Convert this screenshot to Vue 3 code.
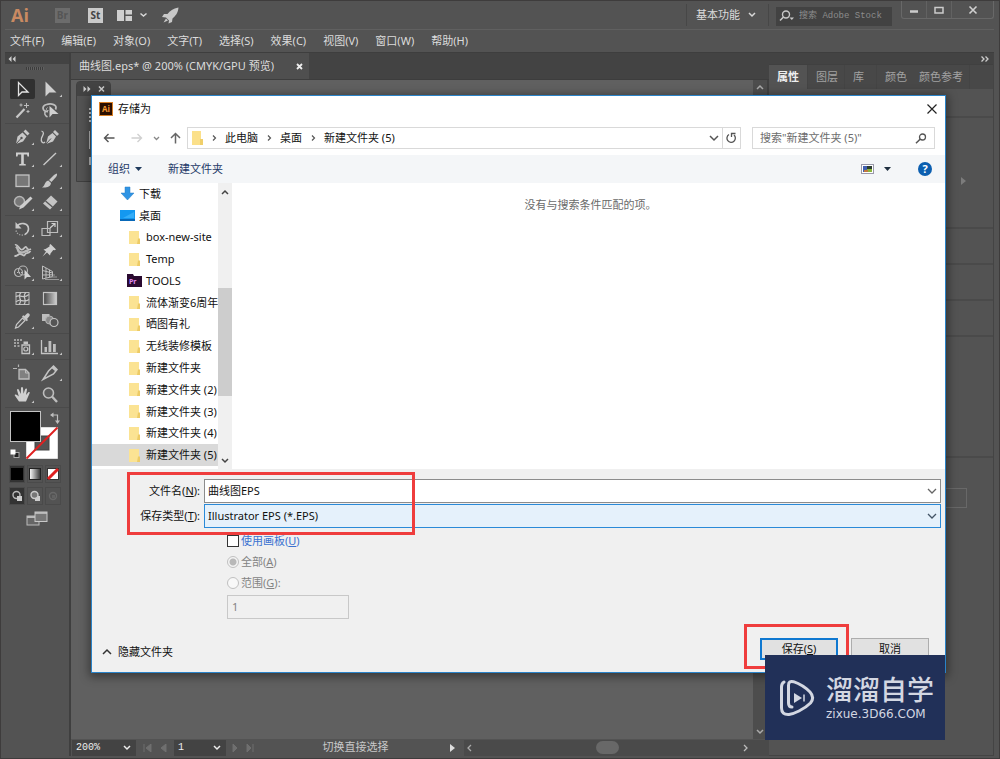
<script setup>
import { ref } from 'vue'

const menus = ['文件(F)', '编辑(E)', '对象(O)', '文字(T)', '选择(S)', '效果(C)', '视图(V)', '窗口(W)', '帮助(H)']
const panelTabs = ['属性', '图层', '库', '颜色', '颜色参考']
const sections = ['s29', 's111', 's36', 's36', 's36', 's121']

const tri = '<path d="M26 16.5V19h-2.5z" fill="#c4c4c4"/>'
const groups = [
  [
    { name: '选择工具', on: true, svg: '<path d="M10.5 4.5V17.5L14 14H20Z" fill="none" stroke="#e4e4e4" stroke-width="1.3"/>' },
    { name: '直接选择工具', svg: '<path d="M9.5 3.5V18.5L13.4 14.5H20.5Z" fill="#cfcfcf"/>' + tri },
    { name: '魔棒工具', svg: '<path d="M8.500 17.500L16.500 9" stroke="#c8c8c8" stroke-width="2.200"/><path d="M18.500 3v5M16 5.500h5M13 3.500v3M11.500 5h3M20 10v3M18.500 11.500h3" stroke="#bdbdbd"/>' },
    { name: '套索工具', svg: '<path d="M19.500 9.500C22 4.500 15 3 10.500 4.500C5.500 6 6 11.500 12 11.500" fill="none" stroke="#bdbdbd" stroke-width="1.800"/><path d="M10 11C7.500 13 9 15.500 11.500 17" fill="none" stroke="#bdbdbd" stroke-width="1.500"/><path d="M13.500 6V17.500l3-3.500h6Z" fill="#d0d0d0"/><path d="M11.500 7.500c-2 1.500-1 3.500 1 3" fill="none" stroke="#bdbdbd"/>' }
  ],
  [
    { name: '钢笔工具', svg: '<path d="M8 18L9.500 10.500L14.500 6.500L18.500 10.500L15 15.500Z" fill="#c8c8c8"/><path d="M15.500 5.500L17.500 3.500L21.500 7.500L19.500 9.500Z" fill="#c8c8c8"/><path d="M8 18L13 12.500" stroke="#535353"/><circle cx="13.500" cy="12" r="1.200" fill="#535353"/>' + tri },
    { name: '曲率工具', svg: '<path d="M10 18L12 10.500L16.500 7L20 10.500L17 15.500Z" fill="#c8c8c8"/><path d="M17 6L19 4L23 8L21 10Z" fill="#c8c8c8"/><path d="M10 18L15 12.500" stroke="#535353"/><path d="M5.500 5C9 6 7 9 5.500 12C4.500 16 7 18 9 16" fill="none" stroke="#c8c8c8" stroke-width="1.300"/>' },
    { name: '文字工具', svg: '<path d="M8 4.500H21V8.500H19.500L19 6.500H15.800V15.800L17.800 16.300V17.500H11.200V16.300L13.200 15.800V6.500H10L9.500 8.500H8Z" fill="#cfcfcf"/>' + tri },
    { name: '直线段工具', svg: '<path d="M7.500 17L20 5" stroke="#c8c8c8" stroke-width="1.400"/>' + tri },
    { name: '矩形工具', svg: '<rect x="8" y="5" width="13" height="11.500" fill="#777" stroke="#c4c4c4" stroke-width="1.300"/>' + tri },
    { name: '画笔工具', svg: '<path d="M20.500 3.500C21.500 4 21 5.500 20 7L15.500 12L13 10L18 5Z" fill="#c8c8c8"/><path d="M12.300 10.500L15 13C14.500 17 10.500 18 6 17.500C9 16 8.500 11.500 12.300 10.500Z" fill="#c8c8c8"/>' + tri },
    { name: '形状生成工具', svg: '<circle cx="11.500" cy="9.500" r="5" fill="#777" stroke="#b5b5b5" stroke-width="1.500"/><path d="M22.500 4.500L24.500 6.500L15.500 15.500L11 17.500L12.500 13.500Z" fill="#cfcfcf"/>' + tri },
    { name: '橡皮擦工具', svg: '<path d="M15 3.500L21.500 9.500L14 17.500L7 11.500Z" fill="#c4c4c4"/><path d="M9.500 9L16.500 15" stroke="#535353" stroke-width="1.200"/>' + tri }
  ],
  [
    { name: '旋转工具', svg: '<path d="M9 8.500C12 3.500 20.500 5 20.500 11C20.500 14 18.500 15.500 17 16.500" fill="none" stroke="#c8c8c8" stroke-width="1.600"/><path d="M7.500 4V10.500H13.500Z" fill="#c8c8c8"/><path d="M8 12.500C9 16.500 13 18 17 16.500" fill="none" stroke="#aaa" stroke-width="1.300" stroke-dasharray="1.200 1.400"/>' + tri },
    { name: '比例缩放工具', svg: '<path d="M11.500 3.500H21.500V14.500H11.500Z" fill="none" stroke="#bdbdbd" stroke-width="1.200"/><path d="M6 10.500H14V17.500H6Z" fill="none" stroke="#bdbdbd" stroke-width="1.200"/><path d="M14 10L19 5.500M15.500 5.500H19V9" fill="none" stroke="#d0d0d0" stroke-width="1.200"/>' + tri },
    { name: '宽度工具', svg: '<path d="M6.500 15.500C9 17.500 10 13.500 12.500 14S16 17 17 14.500S20 14.500 22.500 11" fill="none" stroke="#c4c4c4" stroke-width="1.800"/><path d="M7 5C9.500 3.500 10.500 8 13 9.500S17 5 18.500 7.500S21 10 23 9" fill="none" stroke="#c4c4c4" stroke-width="1.600"/><path d="M8 6.500C11 9 9 12 13 12.500S18 9 20.500 11.500" fill="none" stroke="#b8b8b8" stroke-width="2.400"/>' + tri },
    { name: '操控变形工具', svg: '<path d="M14.500 4L20 9.500L18.500 10.200L17.300 10L14.500 13.500L14 15.500L11 12.500L6.500 16.500L10 11.500L7.500 9.500L9.500 9L13.500 6.500L13.500 5Z" fill="#cfcfcf"/>' + tri },
    { name: '形状生成器工具', svg: '<circle cx="10.500" cy="10.500" r="4" fill="none" stroke="#b5b5b5" stroke-width="1.200"/><circle cx="15" cy="8.500" r="4.500" fill="none" stroke="#b5b5b5" stroke-width="1.200"/><path d="M9 10.500h6" stroke="#bbb" stroke-dasharray="1 1"/><path d="M16.500 7.500V17.500L19 15H23Z" fill="#d4d4d4"/>' + tri },
    { name: '透视网格工具', svg: '<path d="M6.500 4V17M6.500 4L16.500 9.500V14.500L6.500 17M6.500 8.500L16.500 11M6.500 13L16.500 12.800M10 6V16M13.500 7.800V15.300" fill="none" stroke="#bdbdbd"/><path d="M17 13H19M14 15H21M9 17.500H23" stroke="#999"/>' + tri }
  ],
  [
    { name: '网格工具', svg: '<rect x="8" y="4.500" width="13" height="12" fill="none" stroke="#bdbdbd"/><path d="M8 9C11 5 14 12 21 6.500M8 14C12 9 15 16 21 11.500M13 4.500C8.500 9 15.500 12 11 16.500M18 4.500C13 8 20 12 16 16.500" fill="none" stroke="#c8c8c8" stroke-width="1.200"/>' },
    { name: '渐变工具', svg: '<defs><linearGradient id="toolRamp"><stop offset="0" stop-color="#444"/><stop offset="1" stop-color="#d0d0d0"/></linearGradient></defs><rect x="7.500" y="4.500" width="13" height="12" fill="url(#toolRamp)" stroke="#c4c4c4" stroke-width="1.200"/>' },
    { name: '吸管工具', svg: '<path d="M16.500 6L19 3.500C21 2.500 22.500 4.500 21.500 6L19 9L20 10L18.800 11.200L14 6.500L15.200 5.200Z" fill="#c8c8c8"/><path d="M14.500 8L17 10.500L10.500 17L7.500 18L8.500 14.500Z" fill="#555" stroke="#c8c8c8" stroke-width="1.200"/>' + tri },
    { name: '混合工具', svg: '<rect x="6" y="4" width="7.500" height="7" fill="#bdbdbd"/><circle cx="13.500" cy="10" r="4" fill="#888" stroke="#b5b5b5"/><circle cx="18" cy="12.500" r="4" fill="#555" stroke="#c4c4c4" stroke-width="1.200"/>' }
  ],
  [
    { name: '符号喷枪工具', svg: '<path d="M14 9H21.500V17.500H14Z" fill="none" stroke="#c4c4c4" stroke-width="1.300"/><path d="M15.500 8V5.500H20V8Z" fill="#c4c4c4"/><circle cx="17.800" cy="13" r="2" fill="none" stroke="#c4c4c4" stroke-width="1.200"/><path d="M6 4h2M9 4h2M12 4h2M6 7h2M9 7h2M6 10h2M9.500 10h2" stroke="#bbb" stroke-width="1.400"/>' + tri },
    { name: '柱形图工具', svg: '<path d="M5.500 4V17.500H22" fill="none" stroke="#c4c4c4" stroke-width="1.300"/><path d="M8.500 11h2.500v5H8.500zM12.500 5h2.800v11h-2.800zM17 8h2.800v8H17z" fill="#bdbdbd"/>' + tri }
  ],
  [
    { name: '画板工具', svg: '<path d="M5 6.500H9M10.500 2.500V5" fill="none" stroke="#b5b5b5" stroke-width="1.200"/><path d="M11 7.500H17.500L21 11V17H11Z" fill="#808080" stroke="#bdbdbd" stroke-width="1.300"/><path d="M17.500 7.500V11H21" fill="none" stroke="#bdbdbd"/>' },
    { name: '切片工具', svg: '<path d="M17.500 4L21 7.500L17.500 12L7 17.500L12.500 9Z" fill="none" stroke="#c4c4c4" stroke-width="1.500"/><path d="M17.500 4L21 7.500L19.500 9.500L15.500 6Z" fill="#c4c4c4"/>' + tri },
    { name: '抓手工具', svg: '<path d="M11 17.500L6.800 11.500C6.500 10.500 8 10 9 11L10.800 12.500L9 6C9 4.800 10.500 4.700 11 6L12.800 10L13 4C13.200 2.800 14.800 2.800 15 4L15.500 9.800L17.200 5C17.800 4 19.200 4.500 19 5.600L18 11L20.300 8.200C21.200 7.500 22.200 8.300 21.600 9.300L18 17.500Z" fill="#cfcfcf"/>' + tri },
    { name: '缩放工具', svg: '<circle cx="12.500" cy="9" r="5" fill="#5c5c5c" stroke="#bdbdbd" stroke-width="1.600"/><path d="M16 12.500L21 18" stroke="#bdbdbd" stroke-width="2.400"/>' }
  ]
]

const tree = [
  { label: '下载', kind: 'down', top: true },
  { label: '桌面', kind: 'desk', top: true },
  { label: 'box-new-site', kind: 'folder' },
  { label: 'Temp', kind: 'folder' },
  { label: 'TOOLS', kind: 'pr' },
  { label: '流体渐变6周年', kind: 'folder' },
  { label: '晒图有礼', kind: 'folder' },
  { label: '无线装修模板', kind: 'folder' },
  { label: '新建文件夹', kind: 'folder' },
  { label: '新建文件夹 (2)', kind: 'folder' },
  { label: '新建文件夹 (3)', kind: 'folder' },
  { label: '新建文件夹 (4)', kind: 'folder' },
  { label: '新建文件夹 (5)', kind: 'folder', selected: true }
]
const crumbs = ['此电脑', '桌面', '新建文件夹 (5)']
const fileName = ref('曲线图EPS')
const fileType = ref('eps')
</script>

<template>
  <div class="app">
    <header class="titlebar">
      <span class="logo">Ai</span>
      <button class="badge br">Br</button>
      <button class="badge st">St</button>
      <button class="plain arrange" aria-label="排列文档">
        <svg width="30" height="14" viewBox="0 0 30 14"><path d="M0 2h7v11H0zM8.500 2H15v4.500H8.500zM8.500 8H15v5H8.500z" fill="#cfcfcf" /><path d="M23.500 5.500L26.500 8L29.500 5.500" fill="none" stroke="#d8d8d8" stroke-width="1.500" /></svg>
      </button>
      <button class="plain rocket" aria-label="GPU 性能">
        <svg width="18" height="17" viewBox="0 0 18 17"><path d="M16.500 0.500C11 1.500 8 4 5.500 7H2L0 10L4 10.500L7 13.500L6.500 16.500L10 15L10.500 11.500C13.500 9 16 6 16.500 0.500Z" fill="#c8c8c8" /><path d="M4 11.500L1.500 15.500L6 13.500Z" fill="#c8c8c8" /></svg>
      </button>
      <span class="spacer"></span>
      <button class="plain workspace-btn">基本功能
        <svg width="8" height="6" viewBox="0 0 8 6"><path d="M1 1l3 3 3-3" fill="none" stroke="#d8d8d8" stroke-width="1.500" /></svg>
      </button>
      <label class="stock">
        <svg width="16" height="12" viewBox="0 0 16 12"><circle cx="7" cy="4.500" r="3.500" fill="none" stroke="#c8c8c8" stroke-width="1.400" /><path d="M4.500 7L1 10.500" stroke="#c8c8c8" stroke-width="1.600" /><path d="M10.500 7.500h4.500L12.800 10z" fill="#c8c8c8" /></svg>
        <input type="text" placeholder="搜索 Adobe Stock" aria-label="搜索 Adobe Stock" />
      </label>
      <div class="winctl">
        <button aria-label="最小化"><svg width="10" height="10"><path d="M1 6.500h8" stroke="#ccc" stroke-width="2.500" /></svg></button>
        <button aria-label="最大化"><svg width="10" height="10"><rect x="1" y="2.500" width="8" height="5.500" fill="none" stroke="#ccc" stroke-width="1.500" /></svg></button>
        <button class="wide" aria-label="关闭"><svg width="10" height="10"><path d="M1.500 1.500l7 7M8.500 1.500l-7 7" stroke="#d0d0d0" stroke-width="1.600" /></svg></button>
      </div>
    </header>

    <nav class="menubar">
      <button v-for="m in menus" :key="m">{{ m }}</button>
    </nav>

    <div class="work">
      <aside class="tools">
        <div class="strip"><svg width="8" height="6" viewBox="0 0 8 6"><path d="M3.500 0v6L0.500 3zM7.500 0v6L4.500 3z" fill="#ccc" /></svg></div>
        <div class="grip"></div>
        <div v-for="(g, i) in groups" :key="i" class="group">
          <button v-for="t in g" :key="t.name" class="tool" :class="{ on: t.on }" :aria-label="t.name">
            <svg width="28" height="22" viewBox="0 0 28 22" v-html="t.svg"></svg>
          </button>
        </div>
        <button class="plain swatches" aria-label="填色和描边">
          <svg width="54" height="52" viewBox="0 0 54 52">
            <path d="M18.500 18.500H49.500V49.500H18.500Z" fill="#fff" stroke="#ddd" />
            <rect x="27" y="27" width="14" height="14" fill="#535353" stroke="#444" />
            <path d="M18.500 49.500L49.500 18.500" stroke="#e02020" stroke-width="2" />
            <rect x="2.500" y="2.500" width="30" height="30" fill="#000" stroke="#c4c4c4" />
            <path d="M44 6H49.500V13" fill="none" stroke="#bdbdbd" stroke-width="1.200" /><path d="M42 6l3.500-2.500v5zM49.500 15l-2.500-3.500h5z" fill="#bdbdbd" />
            <rect x="6" y="43.500" width="5" height="5" fill="#222" stroke="#aaa" /><rect x="2.500" y="40.500" width="5" height="5" fill="#fff" />
          </svg>
        </button>
        <div class="modes">
          <button class="on" aria-label="颜色"><svg width="14" height="14"><rect x="1" y="1" width="12" height="12" fill="#000" /></svg></button>
          <button aria-label="渐变"><svg width="14" height="14"><defs><linearGradient id="modeRamp"><stop offset="0" stop-color="#fff" /><stop offset="1" stop-color="#333" /></linearGradient></defs><rect x="1.500" y="1.500" width="11" height="11" fill="url(#modeRamp)" stroke="#222" /></svg></button>
          <button aria-label="无"><svg width="14" height="14"><rect x="1.500" y="1.500" width="11" height="11" fill="#fff" stroke="#333" /><path d="M2 12L12 2" stroke="#e02020" stroke-width="3" /></svg></button>
        </div>
        <div class="modes draw">
          <button class="on" aria-label="正常绘图"><svg width="14" height="14"><circle cx="6.500" cy="6" r="3.500" fill="none" stroke="#bbb" stroke-width="1.400" /><path d="M7 7h5v5H7z" fill="#ccc" /></svg></button>
          <button aria-label="背面绘图"><svg width="14" height="14"><path d="M7 7h5v5H7z" fill="#ccc" /><circle cx="6.500" cy="6" r="3.500" fill="#777" stroke="#ccc" stroke-width="1.400" /></svg></button>
          <button aria-label="内部绘图" disabled><svg width="14" height="14"><circle cx="7" cy="7" r="3.500" fill="none" stroke="#686868" stroke-width="1.400" /><path d="M6 6h3v3H6z" fill="#626262" /></svg></button>
        </div>
        <button class="plain screen" aria-label="更改屏幕模式">
          <svg width="22" height="16" viewBox="0 0 22 16"><rect x="1" y="5" width="12" height="9" fill="#666" stroke="#bbb" /><path d="M1 6h12" stroke="#bbb" stroke-width="2" /><rect x="9" y="1" width="12" height="9.500" fill="#777" stroke="#c8c8c8" /><path d="M9 2h12" stroke="#c8c8c8" stroke-width="1.500" /></svg>
        </button>
      </aside>

      <main class="doc">
        <div class="doctabs">
          <div class="doctab"><span>曲线图.eps* @ 200% (CMYK/GPU 预览)</span>
            <button class="plain" aria-label="关闭文档"><svg width="7" height="7"><path d="M1 1l5 5M6 1L1 6" stroke="#eee" stroke-width="1.800" /></svg></button>
          </div>
        </div>
        <div class="canvasrow">
          <div class="canvas">
            <div class="floater">
              <div class="fhead"><svg width="22" height="8" viewBox="0 0 22 8"><path d="M0.500 1v6l3-3zM4.500 1v6l3-3z" fill="#ccc" /><path d="M16 1.500l5 5M21 1.500l-5 5" stroke="#ccc" stroke-width="1.500" /></svg></div>
              <svg class="fbody" width="10" height="70" viewBox="0 0 10 70"><path d="M2 13h2M2 17h2M2 21h2M2 25h2" stroke="#ccc" stroke-width="2" /><path d="M2.500 35v18" stroke="#bbb" /><path d="M4 38h6v4H4zM4 46h6v4H4zM2 61h8v8H2z" fill="#bbb" /></svg>
            </div>
          </div>
          <div class="vscroll">
            <svg width="8" height="6"><path d="M1 5l3-3 3 3" fill="none" stroke="#aaa" stroke-width="1.500" /></svg>
            <svg width="8" height="6"><path d="M1 1l3 3 3-3" fill="none" stroke="#aaa" stroke-width="1.500" /></svg>
          </div>
        </div>
        <footer class="status">
          <label class="cell zoom"><span>200%</span><svg width="8" height="6"><path d="M1 1l3 3 3-3" fill="none" stroke="#eee" stroke-width="1.500" /></svg></label>
          <svg class="pager" width="26" height="8" viewBox="0 0 26 8"><path d="M2 0v8M9 0v8L4 4zM24 0v8L19 4z" fill="#777" stroke="#777" /></svg>
          <label class="cell page"><span>1</span><svg width="8" height="6"><path d="M1 1l3 3 3-3" fill="none" stroke="#eee" stroke-width="1.500" /></svg></label>
          <svg class="pager" width="22" height="8" viewBox="0 0 22 8"><path d="M1 0v8L5 4zM15 0v8L19 4zM21 0v8" fill="#777" stroke="#777" /></svg>
          <span class="hint">切换直接选择</span>
          <svg class="play" width="6" height="8"><path d="M0 0v8l5-4z" fill="#ddd" /></svg>
          <div class="hscroll">
            <svg width="6" height="8"><path d="M5 1L2 4l3 3" fill="none" stroke="#aaa" stroke-width="1.300" /></svg>
            <i class="thumb"></i>
            <svg width="6" height="8"><path d="M1 1l3 3-3 3" fill="none" stroke="#bbb" stroke-width="1.300" /></svg>
          </div>
        </footer>
      </main>

      <aside class="panels">
        <div class="strip right"><svg width="8" height="6" viewBox="0 0 8 6"><path d="M0.500 0.500L3 3L0.500 5.500M4.500 0.500L7 3L4.500 5.500" fill="none" stroke="#ccc" stroke-width="1.300" /></svg></div>
        <div class="ptabs"><button v-for="(t, i) in panelTabs" :key="t" :class="{ on: i === 0 }">{{ t }}</button></div>
        <div v-for="(s, i) in sections" :key="i" class="section" :class="s">
          <svg v-if="i === 1" width="6" height="8"><path d="M0 0v8l5-4z" fill="#7c7c7c" /></svg>
        </div>
        <div class="section last"><span class="ghost"></span></div>
      </aside>
    </div>

    <section class="dialog" role="dialog" aria-label="存储为">
      <div class="dtitle">
        <span class="aiicon">Ai</span><span>存储为</span><span class="spacer"></span>
        <button class="plain" aria-label="关闭"><svg width="12" height="12"><path d="M1.500 1.500l9 9M10.500 1.500l-9 9" stroke="#222" stroke-width="1.200" /></svg></button>
      </div>
      <div class="dnav">
        <button class="plain" aria-label="后退"><svg width="12" height="10"><path d="M11.500 5H1.500M5.500 1L1.500 5l4 4" fill="none" stroke="#555" stroke-width="1.400" /></svg></button>
        <button class="plain fwd" aria-label="前进"><svg width="12" height="10"><path d="M0.500 5h10M6.500 1l4 4-4 4" fill="none" stroke="#d0d0d0" stroke-width="1.400" /></svg></button>
        <button class="plain hist" aria-label="最近"><svg width="7" height="5"><path d="M1 1l2.500 2.500L6 1" fill="none" stroke="#888" stroke-width="1.300" /></svg></button>
        <button class="plain up" aria-label="向上"><svg width="11" height="12"><path d="M5.500 11.500V1.500M1 6l4.500-4.500L10 6" fill="none" stroke="#666" stroke-width="1.500" /></svg></button>
        <div class="address">
          <svg width="13" height="16" viewBox="0 0 13 16"><path d="M1 1h9v14H1z" fill="#fbe08a" /><path d="M9 9h3v6H9z" fill="#f0cf6a" /></svg>
          <template v-for="c in crumbs" :key="c">
            <svg class="sep" width="5" height="8"><path d="M1 1.500L3.500 4L1 6.500" fill="none" stroke="#555" stroke-width="1.200" /></svg>
            <button class="plain crumb">{{ c }}</button>
          </template>
          <span class="spacer"></span>
          <button class="plain drop" aria-label="展开"><svg width="10" height="7"><path d="M1 1l4 4 4-4" fill="none" stroke="#555" stroke-width="1.500" /></svg></button>
          <button class="plain refresh" aria-label="刷新"><svg width="11" height="12" viewBox="0 0 11 12"><path d="M3 2.500A4.200 4.200 0 1 0 8 3" fill="none" stroke="#555" stroke-width="1.300" /><path d="M5.500 5V1.500H9.500" fill="none" stroke="#555" stroke-width="1.300" /></svg></button>
        </div>
        <label class="dsearch">
          <input type="text" placeholder='搜索"新建文件夹 (5)"' aria-label="搜索新建文件夹 (5)" />
          <svg width="12" height="11"><circle cx="7.500" cy="4" r="3" fill="none" stroke="#555" stroke-width="1.300" /><path d="M5.300 6L1 10.300" stroke="#555" stroke-width="1.500" /></svg>
        </label>
      </div>
      <div class="dbar">
        <button class="plain">组织<svg class="caret" width="7" height="4"><path d="M0 0h7L3.500 4z" fill="#1f3a5c" /></svg></button>
        <button class="plain newf">新建文件夹</button>
        <span class="spacer"></span>
        <button class="plain view" aria-label="更改视图">
          <svg width="30" height="10" viewBox="0 0 30 10"><rect x="0.500" y="0.500" width="12" height="9" fill="#fff" stroke="#99a" /><path d="M2 2h4v6H2z" fill="#4060b0" /><path d="M6 2h5v3H6z" fill="#2a3a30" /><path d="M6 5h5v3H6z" fill="#8ab53a" /><path d="M3 6h4v2H3z" fill="#c07840" /><path d="M23 3h7l-3.500 4z" fill="#1f2f3f" /></svg>
        </button>
        <button class="help" aria-label="帮助">?</button>
      </div>
      <div class="dbody">
        <ul class="tree">
          <li v-for="n in tree" :key="n.label" :class="{ top: n.top, sel: n.selected }">
            <svg v-if="n.kind === 'folder'" width="15" height="15" viewBox="0 0 15 15"><path d="M2 1h10v13H2z" fill="#fbe393" /><path d="M11 8.500h2V14h-3z" fill="#edcb66" /></svg>
            <svg v-else-if="n.kind === 'down'" width="15" height="15" viewBox="0 0 15 15"><path d="M5 1h5v6h4l-6.500 7L1 7h4z" fill="#2f94e4" stroke="#2a7cc4" stroke-width="0.500" /></svg>
            <svg v-else-if="n.kind === 'desk'" width="15" height="15" viewBox="0 0 15 15"><path d="M0 2h15v11H0z" fill="#1498f0" /><path d="M0 11h15v2H0z" fill="#0868b8" /><path d="M3 10L14 4v6z" fill="#35adf8" /></svg>
            <svg v-else width="15" height="15" viewBox="0 0 15 15"><path d="M0 1h6l1 2h8v11H0z" fill="#2a0a30" /><text x="2" y="11" font-size="7" font-weight="700" fill="#e08af0">Pr</text></svg>
            <span>{{ n.label }}</span>
          </li>
        </ul>
        <div class="tscroll">
          <svg width="8" height="6"><path d="M1 5l3-3 3 3" fill="none" stroke="#444" stroke-width="1.500" /></svg>
          <i></i>
          <svg width="8" height="6"><path d="M1 1l3 3 3-3" fill="none" stroke="#444" stroke-width="1.500" /></svg>
        </div>
        <div class="list">没有与搜索条件匹配的项。</div>
      </div>
      <div class="dform">
        <label class="flabel" for="fname">文件名(<u>N</u>):</label>
        <div class="combo"><input id="fname" v-model="fileName" type="text" /><svg width="10" height="7"><path d="M1 1l4 4 4-4" fill="none" stroke="#666" stroke-width="1.300" /></svg></div>
        <label class="flabel" for="ftype">保存类型(<u>T</u>):</label>
        <div class="combo type"><select id="ftype" v-model="fileType"><option value="eps">Illustrator EPS (*.EPS)</option></select><svg width="10" height="7"><path d="M1 1l4 4 4-4" fill="none" stroke="#456" stroke-width="1.300" /></svg></div>
        <div class="opts">
          <label class="opt blue"><input type="checkbox" /><span>使用画板(<u>U</u>)</span></label>
          <label class="opt"><input type="radio" name="range" checked disabled /><span>全部(<u>A</u>)</span></label>
          <label class="opt"><input type="radio" name="range" disabled /><span>范围(<u>G</u>):</span></label>
          <input class="range" type="text" value="1" disabled aria-label="范围" />
        </div>
      </div>
      <div class="dfoot">
        <button class="plain hide"><svg width="10" height="7"><path d="M1 6l4-4 4 4" fill="none" stroke="#333" stroke-width="1.500" /></svg>隐藏文件夹</button>
        <span class="spacer"></span>
        <button class="btn primary">保存(<u>S</u>)</button>
        <button class="btn">取消</button>
      </div>
      <div class="mark fields"></div>
      <div class="mark save"></div>
    </section>

    <div class="watermark">
      <svg width="36" height="38" viewBox="0 0 36 38"><path d="M5 3Q2.500 4.500 2.500 8V29Q2.500 36 10 35.500Q14 35 20 32Q27 28.500 31.500 24Q36 18.500 31 13Q24 6 14.500 2.700Q9.500 1.500 9.500 6.500V24Q9.500 28 13 28" fill="none" stroke="#d3d7e2" stroke-width="3" stroke-linecap="round" /><path d="M15 14l8 5-8 5z" fill="#d3d7e2" /><path d="M25 15.500v7" stroke="#d3d7e2" stroke-width="1.500" /></svg>
      <div><strong>溜溜自学</strong><span>zixue.3D66.COM</span></div>
    </div>
  </div>
</template>

<style>
body { margin: 0; background: #535353; }
</style>

<style scoped>
.app { position: relative; display: flex; flex-direction: column; min-height: 100vh; box-sizing: border-box; padding: 0 5px 2px 4px; background: #535353; border: 1px solid #3e3c3c; color: #dcdcdc; font: 11px/16px "Noto Sans", "Noto Sans CJK SC", sans-serif; overflow: hidden; }
button, input, select { font: inherit; color: inherit; }
button { margin: 0; padding: 0; border: 0; background: none; white-space: nowrap; }
svg { display: block; flex: none; }
.plain { display: flex; align-items: center; }
.spacer { flex: 1; }

.titlebar { display: flex; align-items: center; height: 28px; border-bottom: 1px solid #606060; }
.logo { width: 50px; padding-left: 6px; box-sizing: border-box; color: #c98a62; font: 700 18px/22px "Open Sans", sans-serif; }
.badge { width: 15px; height: 15px; font: 700 10px/15px "Open Sans", sans-serif; text-align: center; }
.br { background: #6c6c6c; color: #555; }
.st { margin-left: 18px; background: #cacaca; color: #444; }
.arrange { margin-left: 14px; }
.rocket { margin-left: 15px; }
.workspace-btn { gap: 8px; height: 22px; padding: 0 12px 0 9px; border-left: 1px solid #474747; border-right: 1px solid #474747; }
.stock { display: flex; align-items: center; gap: 4px; width: 116px; height: 19px; margin: 2px 9px 0 7px; padding-left: 3px; box-sizing: border-box; background: #424242; }
.stock input { flex: 1; min-width: 0; padding: 0; border: 0; outline: 0; background: none; font: 9px/16px "Liberation Mono", "Noto Sans CJK SC", monospace; }
.stock input::placeholder { color: #8c8c8c; }
.winctl { display: flex; align-self: flex-start; height: 17px; border: 1px solid #686868; border-top: 0; border-radius: 0 0 3px 3px; }
.winctl button { display: flex; align-items: center; justify-content: center; width: 25px; border-right: 1px solid #626262; }
.winctl .wide { width: 41px; border-right: 0; }

.menubar { display: flex; gap: 17px; height: 22px; padding-left: 5px; }
.menubar button { line-height: 20px; }

.work { display: flex; flex: 1; border-top: 1px solid #3e3e3e; }
.strip { display: flex; align-items: center; height: 11px; padding-left: 3px; background: #434343; }
.strip.right { justify-content: flex-end; padding-right: 4px; }
.tools { display: flex; flex-direction: column; width: 64px; border-right: 2px solid #3f3f3f; }
.grip { width: 18px; height: 3px; margin: 3px auto 8px 21px; background: repeating-linear-gradient(90deg, #3c3c3c 0 1px, #606060 1px 2px); }
.group { display: grid; grid-template-columns: 28px 28px; padding-left: 3px; padding-bottom: 1px; margin-bottom: 2px; border-bottom: 1px solid #4a4a4a; }
.tool { height: 22px; }
.tool.on { background: #303030; background-clip: content-box; padding: 1px 1px 1px 2px; border-radius: 3px; }
.tool.on svg { margin: -1px 0 0 -2px; }
.swatches { margin: -1px 0 0 3px; }
.modes { display: grid; grid-template-columns: repeat(3, 18px); margin: 4px 0 0 4px; height: 18px; }
.modes button { display: flex; align-items: center; justify-content: center; width: 16px; border: 1px solid #4a4a4a; }
.modes .on { background: #333; }
.draw { margin-top: 4px; }
.screen { margin: 6px 0 0 21px; }

.doc { display: flex; flex: 1; flex-direction: column; min-width: 0; background: #535353; }
.doctabs { height: 26px; background: #434343; border-bottom: 1px solid #3d3d3d; }
.doctab { display: flex; align-items: center; gap: 22px; width: max-content; height: 26px; padding: 0 6px 0 8px; background: #4f4f4f; }
.canvasrow { display: flex; flex: 1; }
.canvas { position: relative; flex: 1; background: #606060; }
.floater { position: absolute; left: 5px; top: 1px; width: 35px; height: 101px; background: #535353; border: 1px solid #404040; border-radius: 4px 4px 0 0; box-sizing: border-box; }
.fhead { height: 14px; padding: 3px 0 0 6px; background: #434343; box-sizing: border-box; }
.fbody { margin-left: 10px; }
.vscroll { display: flex; flex-direction: column; align-items: center; justify-content: space-between; width: 14px; padding: 4px 0; background: #4d4d4d; border-right: 2px solid #414141; }
.status { display: flex; align-items: center; height: 17px; margin-left: 1px; font-family: "Liberation Mono", "Noto Sans CJK SC", monospace; }
.cell { display: flex; align-items: center; justify-content: space-between; box-sizing: border-box; height: 16px; padding: 0 5px 0 4px; background: #434343; font-size: 10px; color: #eee; }
.zoom { width: 64px; }
.page { width: 52px; }
.pager { margin: 0 6px; opacity: .8; }
.hint { width: 179px; margin: 0 0 0 6px; text-align: center; color: #c8c8c8; }
.play { margin: 0 8px 0 5px; }
.hscroll { display: flex; flex: 1; align-items: center; justify-content: space-between; height: 16px; padding: 0 20px 0 2px; background: #4a4a4a; }
.thumb { width: 23px; height: 13px; border-radius: 7px; background: #686868; }

.panels { display: flex; flex-direction: column; width: 225px; border-right: 1px solid #444; box-sizing: border-box; }
.ptabs { display: flex; height: 24px; background: #484848; border-top: 1px solid #404040; }
.ptabs button { padding: 0 6px 0 8px; color: #a2a2a2; border-right: 1px solid #444; }
.ptabs .on { padding: 0 8px; background: #535353; color: #eee; font-weight: 700; }
.ptabs button:nth-child(3) { padding-right: 12px; }
.ptabs button:nth-child(4) { border-right: 0; padding-right: 4px; }
.section { display: flex; justify-content: flex-end; align-items: center; box-sizing: border-box; padding-right: 26px; border-bottom: 2px solid #4a4a4a; }
.s29 { height: 29px; } .s111 { height: 111px; } .s36 { height: 36px; } .s121 { height: 121px; }
.s111 { padding-bottom: 0; padding-top: 16px; }
.last { flex: 1; align-items: flex-start; padding-top: 30px; border-bottom: 1px solid #444; }
.ghost { width: 50px; height: 18px; border: 1px solid #686868; }

.dialog { position: absolute; left: 90px; right: 53px; top: 94px; display: flex; flex-direction: column; background: #fff; border: 1px solid #2a83c8; color: #111; box-shadow: 0 2px 9px 2px rgba(0, 0, 0, .4); }
.dtitle { display: flex; align-items: center; gap: 5px; height: 26px; padding: 0 7px; }
.aiicon { width: 12px; height: 12px; border: 1px solid #d98026; background: #2b0f00; color: #f59a30; font: 700 8px/12px "Open Sans", sans-serif; text-align: center; }
.dnav { display: flex; align-items: center; height: 32px; padding: 0 10px 1px 11px; }
.fwd { margin-left: 16px; }
.hist { margin-left: 10px; }
.up { margin: 0 6px 0 10px; }
.address { display: flex; flex: 1; align-items: center; height: 20px; border: 1px solid #d9d9d9; padding-left: 3px; }
.sep { margin: 0 8px; }
.crumb { margin-right: 1px; color: #111; }
.drop { margin-right: 3px; }
.refresh { height: 20px; padding: 0 3px; border-left: 1px solid #d9d9d9; }
.dsearch { display: flex; align-items: center; width: 183px; height: 22px; margin-left: 11px; padding: 0 7px; box-sizing: border-box; border: 1px solid #d9d9d9; }
.dsearch input { flex: 1; min-width: 0; padding: 0; border: 0; outline: 0; background: none; }
.dsearch input::placeholder { color: #6d6d6d; }
.dbar { display: flex; align-items: center; height: 28px; padding: 0 13px 0 16px; background: #f4f6f8; color: #1f3a68; }
.caret { margin-left: 5px; }
.newf { margin-left: 26px; }
.view { margin-right: 27px; }
.help { width: 14px; height: 14px; border-radius: 50%; background: #0c5fb0; color: #fff; font: 700 11px/14px "Open Sans", sans-serif; }
.dbody { display: flex; height: 286px; }
.tree { display: grid; grid-template-rows: repeat(13, 1fr); width: 126px; height: 283px; margin: 0; padding: 0; list-style: none; }
.tree li { display: flex; align-items: center; gap: 4px; min-width: 0; padding-left: 35px; overflow: hidden; white-space: nowrap; }
.tree li.top { padding-left: 28px; }
.tree li.sel { background: #d9d9d9; }
.tscroll { display: flex; flex-direction: column; align-items: center; width: 14px; height: 286px; padding: 6px 0 5px; box-sizing: border-box; background: #f0f0f0; }
.tscroll i { width: 14px; height: 108px; margin: 93px 0 auto; background: #cdcdcd; }
.list { flex: 1; padding: 14px 0 0 4px; text-align: center; color: #6a6a6a; }
.dform { display: grid; grid-template-columns: 108px 1fr; column-gap: 4px; row-gap: 1px; padding: 10px 4px 0 0; background: #f0f0f0; }
.flabel { text-align: right; line-height: 24px; }
.combo { display: flex; align-items: center; height: 24px; box-sizing: border-box; padding: 0 3px; border: 1px solid #8c8c8c; background: #fff; }
.combo input, .combo select { flex: 1; min-width: 0; padding: 0; border: 0; outline: 0; background: none; appearance: none; }
.type { border-color: #2a8ad8; background: #e5f1fb; }
.opts { grid-column: 2; display: flex; flex-direction: column; align-items: flex-start; padding: 1px 0 0 23px; }
.opt { display: flex; align-items: center; gap: 2px; height: 21px; color: #838383; }
.opt.blue { color: #3a72d0; }
.opt input { width: 12px; height: 12px; margin: 0; box-sizing: border-box; appearance: none; border: 1px solid #c0c0c0; border-radius: 50%; background: #f8f8f8; }
.opt input[type="checkbox"] { border: 1px solid #333; border-radius: 0; background: #fff; }
.opt input[type="radio"]:checked { background: radial-gradient(circle, #b8b8b8 0 3px, #f4f4f4 4px); }
.range { width: 122px; height: 24px; margin-top: 2px; padding: 0 4px 2px; box-sizing: border-box; border: 1px solid #c8c8c8; background: #f0f0f0; color: #838383; }
.dfoot { display: flex; align-items: flex-start; gap: 13px; height: 53px; padding: 19px 16px 0 10px; box-sizing: border-box; background: #f0f0f0; }
.hide { gap: 6px; height: 27px; }
.btn { width: 78px; height: 22px; box-sizing: border-box; border: 1px solid #adadad; background: #e1e1e1; color: #111; }
.primary { border: 2px solid #0f78d0; }
.mark { position: absolute; border: 3px solid #ef3d3d; box-sizing: border-box; pointer-events: none; }
.fields { left: 35px; top: 376px; width: 288px; height: 63px; }
.save { right: 96px; bottom: 3px; width: 105px; height: 45px; }

.watermark { position: absolute; right: 54px; bottom: 18px; display: flex; align-items: center; gap: 11px; width: 180px; height: 85px; padding-left: 14px; box-sizing: border-box; background: #213058; color: #d3d7e2; }
.watermark strong { display: block; font: 500 27px/32px "Liberation Sans", "Noto Sans CJK SC", sans-serif; }
.watermark span { display: block; font: 12px/14px "DejaVu Sans", sans-serif; }
</style>
